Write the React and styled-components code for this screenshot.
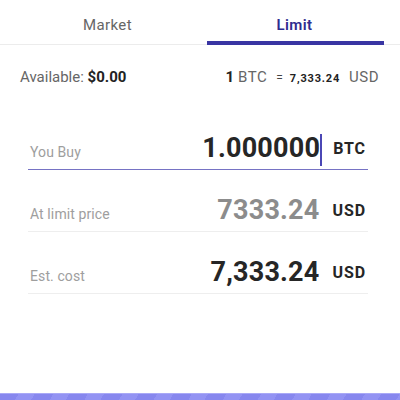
import React from "react";
import styled, { createGlobalStyle } from "styled-components";

const Global = createGlobalStyle`
  html, body { margin: 0; padding: 0; background: #ffffff; }
  body { font-family: Roboto, "Noto Sans", "Liberation Sans", sans-serif; }
  * { box-sizing: border-box; }
`;

const Page = styled.div`
  width: 400px;
  min-height: 400px;
  display: flex;
  flex-direction: column;
  background: #fff;
`;

const TabBar = styled.div`
  display: flex;
  height: 45px;
  padding: 0 12px 0 14px;
  border-bottom: 1px solid #ececec;
`;

const Tab = styled.div`
  position: relative;
  flex: 1;
  display: flex;
  align-items: center;
  justify-content: center;
  padding-top: 6px;
  font-size: 15px;
  letter-spacing: 0.4px;
  line-height: 18px;
  font-weight: ${(p) => (p.$active ? 600 : 400)};
  color: ${(p) => (p.$active ? "#2f2c8e" : "#666666")};

  &::after {
    content: "";
    display: ${(p) => (p.$active ? "block" : "none")};
    position: absolute;
    left: 6px;
    right: 4px;
    bottom: -1px;
    height: 4px;
    background: #3935a3;
  }
`;

const InfoRow = styled.div`
  display: flex;
  justify-content: space-between;
  align-items: baseline;
  padding: 23px 21px 0 20px;
  font-size: 15px;
  line-height: 18px;
`;

const Muted = styled.span`
  color: #666666;
  letter-spacing: ${(p) => p.$ls || "0"};
`;

const Strong = styled.span`
  color: #222222;
  font-weight: 700;
  font-size: ${(p) => p.$size || "15px"};
  letter-spacing: ${(p) => p.$ls || "0"};
`;

const Rate = styled.div`
  display: flex;
  align-items: baseline;
`;

const Eq = styled.span`
  color: #444;
  font-size: 12px;
  margin: 0 7px 0 9px;
`;

const Spacer = styled.span`
  display: inline-block;
  width: ${(p) => p.$w}px;
`;

const Fields = styled.div`
  display: flex;
  flex-direction: column;
  gap: 24px;
  padding: 44px 32px 0 28px;
`;

const Field = styled.div`
  display: flex;
  justify-content: space-between;
  align-items: baseline;
  padding: 0 2px 5px 2px;
  border-bottom: 1px solid ${(p) => (p.$focused ? "#7673c4" : "#eeeeee")};
`;

const Label = styled.span`
  font-size: 14px;
  color: #9e9e9e;
  letter-spacing: 0.1px;
`;

const Amount = styled.div`
  display: flex;
  align-items: center;
  gap: 13px;
`;

const Value = styled.span`
  position: relative;
  font-size: 27px;
  line-height: 32px;
  font-weight: 700;
  letter-spacing: 0.2px;
  color: ${(p) => (p.$dim ? "#8c8c8c" : "#262626")};

  &::after {
    content: "";
    display: ${(p) => (p.$caret ? "block" : "none")};
    position: absolute;
    right: -2px;
    top: 2px;
    bottom: -2px;
    width: 2px;
    background: #4b47b5;
  }
`;

const Unit = styled.span`
  font-size: 16px;
  line-height: 19px;
  font-weight: 700;
  letter-spacing: 0.9px;
  color: #262626;
`;

const Footer = styled.div`
  margin-top: auto;
  height: 7px;
  border-top: 1px solid #a9a9f6;
  background: repeating-linear-gradient(
    120deg,
    #8787ee 0px,
    #8787ee 16px,
    #9393f3 16px,
    #9393f3 30px
  );
`;

export default function App() {
  return (
    <Page>
      <Global />
      <TabBar>
        <Tab>Market</Tab>
        <Tab $active>Limit</Tab>
      </TabBar>
      <InfoRow>
        <span>
          <Muted>Available: </Muted>
          <Strong>$0.00</Strong>
        </span>
        <Rate>
          <Strong>1</Strong>
          <Spacer $w={4} />
          <Muted $ls="0.5px">BTC</Muted>
          <Eq>=</Eq>
          <Strong $size="11px" $ls="0.8px">7,333.24</Strong>
          <Spacer $w={9} />
          <Muted $ls="0.5px">USD</Muted>
        </Rate>
      </InfoRow>
      <Fields>
        <Field $focused>
          <Label>You Buy</Label>
          <Amount>
            <Value $caret>1.000000</Value>
            <Unit>BTC</Unit>
          </Amount>
        </Field>
        <Field>
          <Label>At limit price</Label>
          <Amount>
            <Value $dim>7333.24</Value>
            <Unit>USD</Unit>
          </Amount>
        </Field>
        <Field>
          <Label>Est. cost</Label>
          <Amount>
            <Value>7,333.24</Value>
            <Unit>USD</Unit>
          </Amount>
        </Field>
      </Fields>
      <Footer />
    </Page>
  );
}
